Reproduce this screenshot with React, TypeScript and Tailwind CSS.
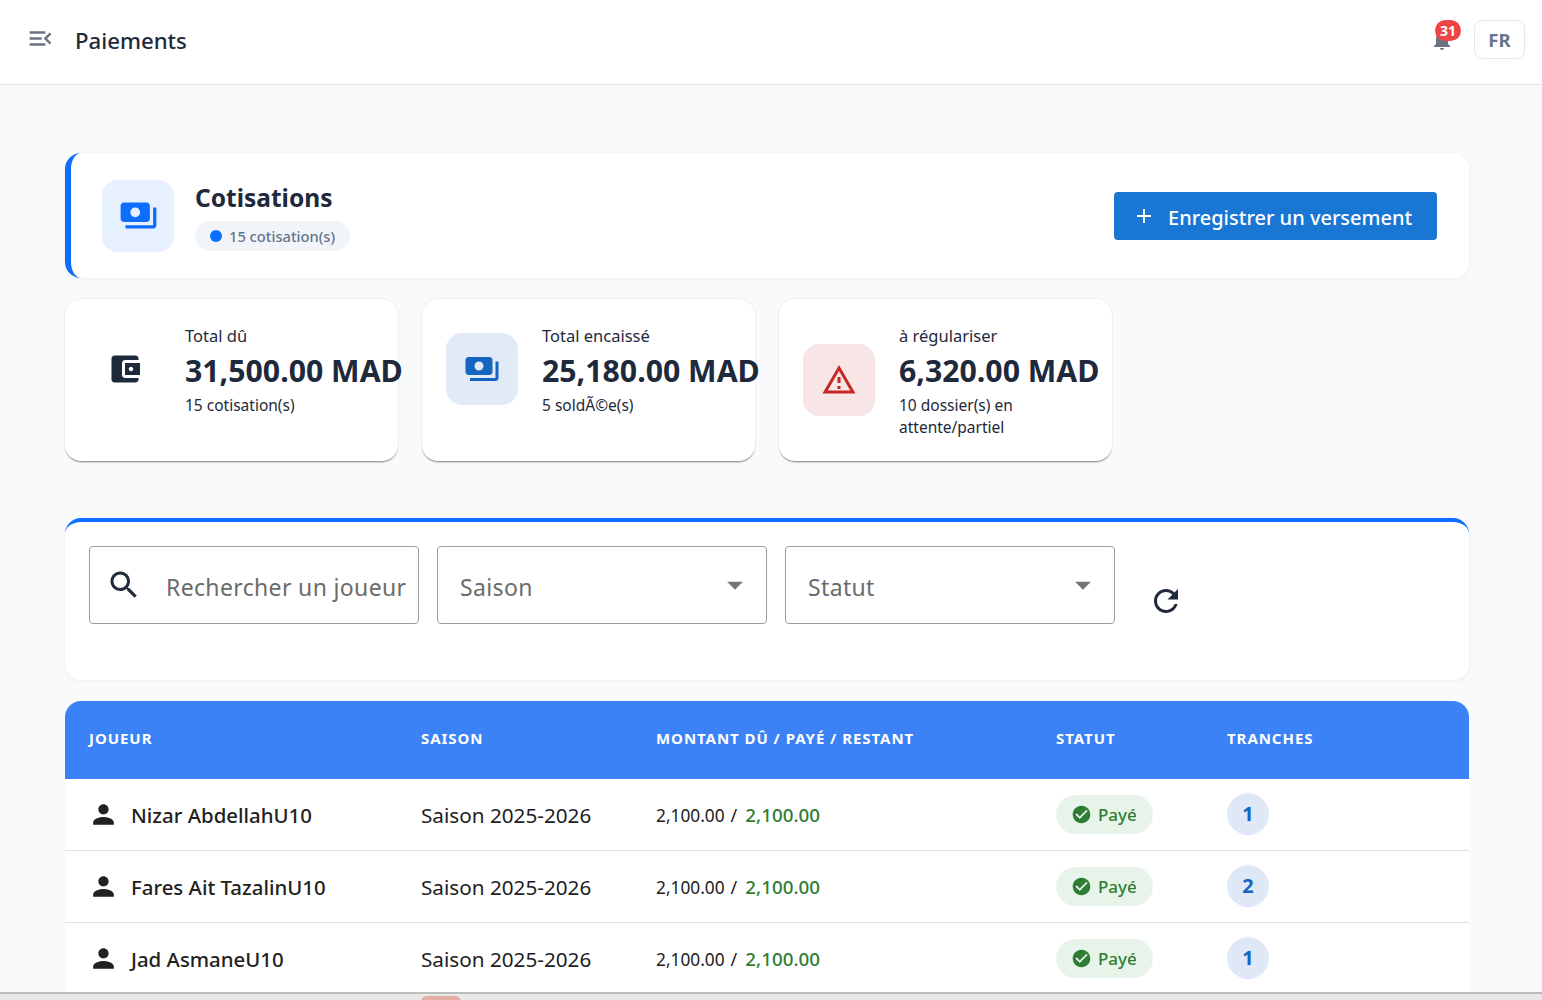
const paths = {
  menuOpen: "M3 18h13v-2H3v2zm0-5h10v-2H3v2zm0-7v2h13V6H3zm18 9.59L17.42 12 21 8.41 19.59 7l-5 5 5 5L21 15.59z",
  bell: "M12 22c1.1 0 2-.9 2-2h-4c0 1.1.89 2 2 2zm6-6v-5c0-3.07-1.64-5.64-4.5-6.32V4c0-.83-.67-1.5-1.5-1.5s-1.5.67-1.5 1.5v.68C7.63 5.36 6 7.92 6 11v5l-2 2v1h16v-1l-2-2z",
  payments: "M19 14V6c0-1.1-.9-2-2-2H3c-1.1 0-2 .9-2 2v8c0 1.1.9 2 2 2h14c1.1 0 2-.9 2-2zm-9-1c-1.66 0-3-1.34-3-3s1.34-3 3-3 3 1.34 3 3-1.34 3-3 3zm13-6v11c0 1.1-.9 2-2 2H4v-2h17V7h2z",
  wallet: "M21 18v1c0 1.1-.9 2-2 2H5c-1.11 0-2-.9-2-2V5c0-1.1.89-2 2-2h14c1.1 0 2 .9 2 2v1h-9c-1.11 0-2 .9-2 2v8c0 1.1.89 2 2 2h9zm-9-2h10V8H12v8zm4-2.5c-.83 0-1.5-.67-1.5-1.5s.67-1.5 1.5-1.5 1.5.67 1.5 1.5-.67 1.5-1.5 1.5z",
  warning: "M12 5.99L19.53 19H4.47L12 5.99M12 2L1 21h22L12 2zm1 14h-2v2h2v-2zm0-6h-2v4h2v-4z",
  add: "M19 13h-6v6h-2v-6H5v-2h6V5h2v6h6v2z",
  search: "M15.5 14h-.79l-.28-.27C15.41 12.59 16 11.11 16 9.5 16 5.91 13.09 3 9.5 3S3 5.91 3 9.5 5.91 16 9.5 16c1.61 0 3.09-.59 4.23-1.57l.27.28v.79l5 4.99L20.49 19l-4.99-5zm-6 0C7.01 14 5 11.99 5 9.5S7.01 5 9.5 5 14 7.01 14 9.5 11.99 14 9.5 14z",
  refresh: "M17.65 6.35C16.2 4.9 14.21 4 12 4c-4.42 0-7.99 3.58-7.99 8s3.57 8 7.99 8c3.73 0 6.84-2.55 7.73-6h-2.08c-.82 2.33-3.04 4-5.65 4-3.31 0-6-2.69-6-6s2.69-6 6-6c1.66 0 3.14.69 4.22 1.78L13 11h7V4l-2.35 2.35z",
  person: "M12 12c2.21 0 4-1.79 4-4s-1.79-4-4-4-4 1.79-4 4 1.79 4 4 4zm0 2c-2.67 0-8 1.34-8 4v2h16v-2c0-2.66-5.33-4-8-4z",
  check: "M12 2C6.48 2 2 6.48 2 12s4.48 10 10 10 10-4.48 10-10S17.52 2 12 2zm-2 15l-5-5 1.41-1.41L10 14.17l7.59-7.59L19 8l-9 9z",
  drop: "M7 10l5 5 5-5z",
};

function Icon({ d, className }: { d: string; className: string }) {
  return (
    <svg viewBox="0 0 24 24" fill="currentColor" className={className}>
      <path d={d} />
    </svg>
  );
}

const stats = [
  { label: "Total dû", value: "31,500.00 MAD", sub: "15 cotisation(s)", icon: paths.wallet, box: "", color: "text-[#1e293b]" },
  { label: "Total encaissé", value: "25,180.00 MAD", sub: "5 soldÃ©e(s)", icon: paths.payments, box: "bg-[#e3eaf7]", color: "text-[#1565c0]" },
  { label: "à régulariser", value: "6,320.00 MAD", sub: "10 dossier(s) en attente/partiel", icon: paths.warning, box: "bg-[#f8e6e6]", color: "text-[#c62828]" },
];

const rows = [
  { name: "Nizar AbdellahU10", tranches: 1 },
  { name: "Fares Ait TazalinU10", tranches: 2 },
  { name: "Jad AsmaneU10", tranches: 1 },
];

const gridCols = "grid grid-cols-[332px_235px_400px_171px_1fr]";

function SelectBox({ label }: { label: string }) {
  return (
    <div className="w-[330px] h-[78px] rounded border border-[#9e9e9e] flex justify-between pl-[22px] pr-[12px]">
      <span className="text-[23px] tracking-[0.35px] text-[#6b6b6b] leading-[80px]">{label}</span>
      <Icon d={paths.drop} className="w-[38px] h-[38px] mt-[19px] text-[#757575]" />
    </div>
  );
}

export default function App() {
  return (
    <div className="relative h-screen overflow-hidden bg-[#f8fafc] text-[#1e293b] font-['Noto_Sans',sans-serif]">
      <header className="h-[85px] bg-white border-b border-[#e2e4ec] flex items-center justify-between pl-[26px] pr-[17px]">
        <div className="flex items-center">
          <Icon d={paths.menuOpen} className="w-[29px] h-[29px] text-[#6b7280] -mt-[7px]" />
          <h1 className="ml-[20px] -mt-[2px] text-[22.2px] font-medium">Paiements</h1>
        </div>
        <div className="flex items-center -mt-[6px]">
          <div className="relative w-6 h-6 mr-5">
            <Icon d={paths.bell} className="w-6 h-6 text-[#6b7280] mt-[1px]" />
            <span className="absolute -top-[7px] left-[5px] h-[21px] min-w-[26px] px-1 rounded-full bg-[#ef4444] text-white text-[14px] font-bold leading-[21px] text-center">31</span>
          </div>
          <div className="w-[51px] h-[39px] pt-[2px] rounded-lg border border-[#e5e7eb] flex items-center justify-center text-[#64748b] font-bold text-[18.5px]">FR</div>
        </div>
      </header>

      <main className="pt-[68px] pl-[65px] pr-[73px]">
        <section className="h-[125px] bg-white rounded-2xl border-l-[6px] border-[#0d6efd] shadow-[0_1px_4px_rgba(0,0,0,0.06)] flex items-center justify-between pl-[31px] pr-8">
          <div className="flex items-center gap-[21px]">
            <div className="w-[72px] h-[72px] rounded-2xl bg-[#e7f0fe] flex items-center justify-center">
              <Icon d={paths.payments} className="w-[39px] h-[39px] text-[#0d6efd]" />
            </div>
            <div className="pt-[1px]">
              <h2 className="text-[24.5px] font-bold leading-[34px]">Cotisations</h2>
              <div className="mt-[6px] inline-flex items-center gap-[7px] h-[30px] px-[15px] rounded-full bg-[#f1f5f9] text-[#64748b] text-[14.7px] font-medium">
                <span className="w-3 h-3 rounded-full bg-[#0d6efd]" />
                15 cotisation(s)
              </div>
            </div>
          </div>
          <button className="w-[323px] h-[48px] rounded bg-[#1976d2] text-white flex items-center pl-[18px] pt-1 text-[20px] font-medium">
            <Icon d={paths.add} className="w-6 h-6 -mt-[3px] mr-[12px]" />
            Enregistrer un versement
          </button>
        </section>

        <section className="mt-[21px] flex gap-6">
          {stats.map((s) => (
            <div key={s.label} className="w-[333px] h-[162px] bg-white rounded-2xl shadow-[0_2px_2px_-1px_rgba(0,0,0,0.5),0_0_2px_rgba(0,0,0,0.1)] p-6">
              <div className="flex items-center gap-6">
                <div className={`w-[72px] h-[72px] -mt-[2px] shrink-0 rounded-2xl flex items-center justify-center ${s.box}`}>
                  <Icon d={s.icon} className={`w-9 h-9 ${s.color}`} />
                </div>
                <div className="min-w-0">
                  <div className="text-[16.5px] leading-[26px]">{s.label}</div>
                  <div className="text-[30.25px] font-bold leading-[44px] whitespace-nowrap">{s.value}</div>
                  <div className="mt-[1px] text-[15.5px] leading-[22px]">{s.sub}</div>
                </div>
              </div>
            </div>
          ))}
        </section>

        <section className="mt-[57px] h-[162px] bg-white rounded-2xl border-t-4 border-[#0d6efd] shadow-[0_1px_4px_rgba(0,0,0,0.06)] pt-6 pl-6 flex gap-[18px]">
          <div className="w-[330px] h-[78px] rounded border border-[#9e9e9e] flex items-center pl-[16px]">
            <Icon d={paths.search} className="w-9 h-9 text-[#1e293b] shrink-0" />
            <span className="ml-[24px] mt-[4px] text-[23px] tracking-[0.35px] text-[#6b6b6b] whitespace-nowrap">Rechercher un joueur</span>
          </div>
          <SelectBox label="Saison" />
          <SelectBox label="Statut" />
          <Icon d={paths.refresh} className="w-9 h-9 ml-[15px] mt-[37px] text-[#1e293b]" />
        </section>

        <section className="mt-[21px] bg-white rounded-t-2xl overflow-hidden">
          <div className={`${gridCols} h-[78px] pb-1 items-center bg-[#3b82f6] text-white text-[15px] font-bold tracking-[0.95px]`}>
            {["JOUEUR", "SAISON", "MONTANT DÛ / PAYÉ / RESTANT", "STATUT", "TRANCHES"].map((h) => (
              <div key={h} className="pl-6 whitespace-nowrap">{h}</div>
            ))}
          </div>
          {rows.map((r) => (
            <div key={r.name} className={`${gridCols} h-[72px] items-center border-b border-[#e0e0e0]`}>
              <div className="pl-6 flex items-center gap-[12px] text-[20.4px] font-medium text-[#212121]">
                <Icon d={paths.person} className="w-[31px] h-[31px] -ml-[1px] shrink-0" />
                <span className="mt-[2px]">{r.name}</span>
              </div>
              <div className="pl-6 mt-[2px] text-[20.7px] text-[#212121]">Saison 2025-2026</div>
              <div className="pl-6 mt-[2px] flex items-baseline text-[#212121]">
                <span className="text-[17.3px]">2,100.00</span>
                <span className="ml-[6px] text-[18px]">/</span>
                <span className="ml-[8px] text-[18.8px] font-medium text-[#2e7d32]">2,100.00</span>
              </div>
              <div className="pl-6">
                <div className="w-[97px] h-[39px] rounded-full bg-[#e8f3e9] text-[#2e7d32] flex items-center pl-[15px] gap-[6px] text-[17px] font-medium">
                  <Icon d={paths.check} className="w-[21px] h-[21px]" />
                  Payé
                </div>
              </div>
              <div className="pl-6">
                <div className="w-[42px] h-[42px] -mt-[2px] rounded-full bg-[#dee8f6] text-[#1565c0] flex items-center justify-center font-bold text-[20px]">{r.tranches}</div>
              </div>
            </div>
          ))}
        </section>
      </main>

      <div className="absolute bottom-0 left-0 right-0 h-2 bg-[#e8e8e8] border-t-2 border-[#bdbdbd]">
        <div className="absolute top-[2px] left-[421px] w-10 h-4 rounded-t-md bg-[#e3aea3]" />
      </div>
    </div>
  );
}
